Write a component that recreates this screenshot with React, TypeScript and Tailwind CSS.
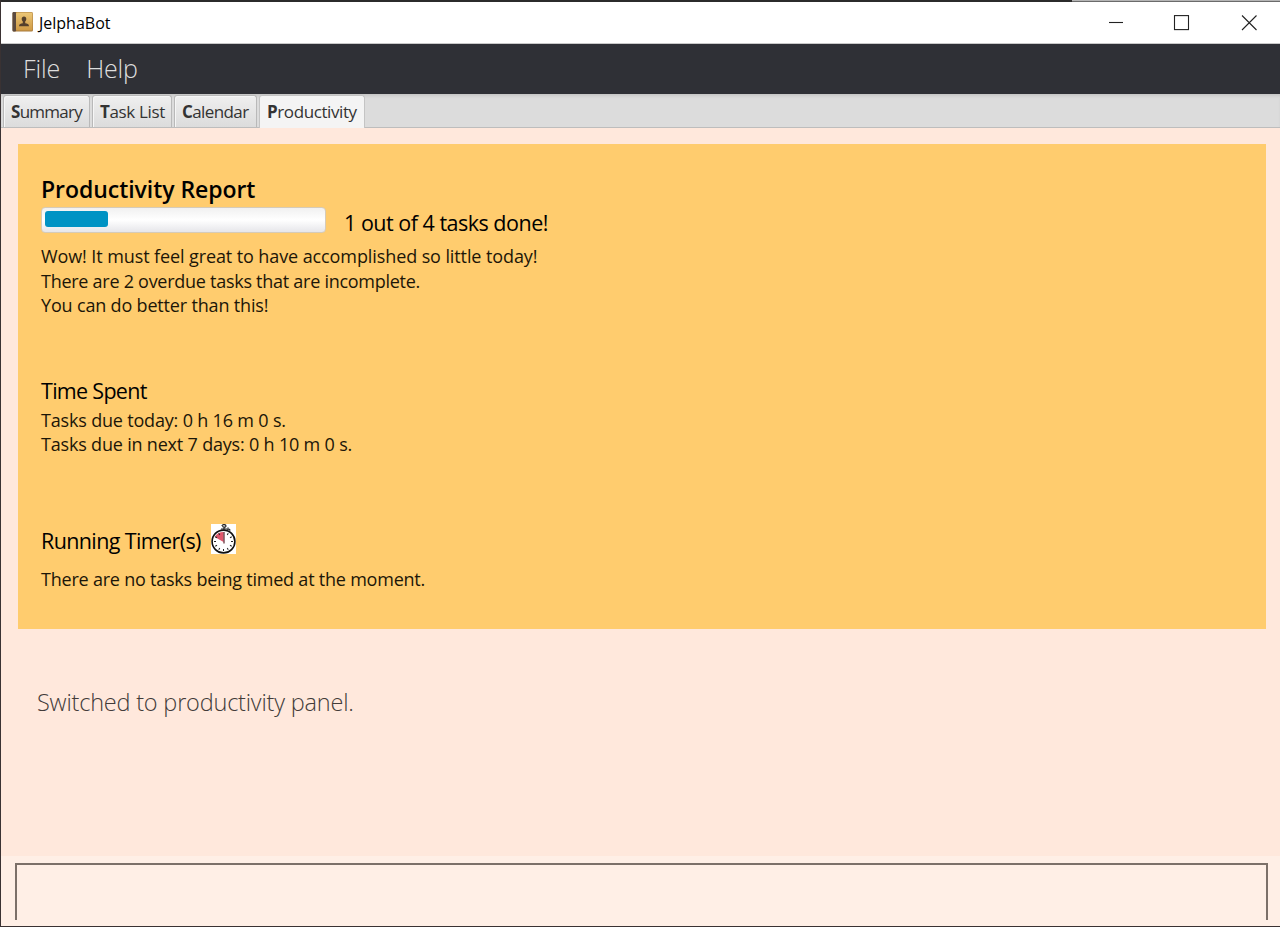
import type { ReactNode } from "react";

function BookIcon() {
  return (
    <svg width="22" height="22" viewBox="0 0 22 22" className="-mt-[2px] shrink-0">
      <defs>
        <linearGradient id="cover" x1="0" y1="0" x2="0" y2="1">
          <stop offset="0" stopColor="#ecc777" />
          <stop offset="1" stopColor="#cf9a45" />
        </linearGradient>
      </defs>
      <rect x="0.5" y="1" width="20.5" height="19.5" rx="1.5" fill="#a87a3c" />
      <rect x="4" y="1.5" width="16.5" height="18" rx="1" fill="url(#cover)" />
      <rect x="0.5" y="1" width="3.500" height="19.5" rx="1" fill="#5b4a40" />
      <path d="M12 5.500c1.500 0 2.300 1 2.300 2.500 0 1.100-.5 2-1.100 2.600v1.600c2 .2 3.800.6 3.800 3.100H7c0-2.500 1.800-2.900 3.800-3.100v-1.600c-.6-.6-1.100-1.500-1.100-2.600 0-1.500.8-2.500 2.300-2.500z" fill="#54402c" />
    </svg>
  );
}

function StopwatchIcon() {
  const ticks = [30, 60, 90, 120, 150, 180, 210, 240, 270, 300, 330];
  return (
    <svg width="25" height="30" viewBox="0 0 25 30" className="shrink-0">
      <rect width="25" height="30" fill="#fff" />
      <path d="M12.5 18V8A10 10 0 0 0 3.800 13z" fill="#e0566b" />
      <circle cx="12.500" cy="17.500" r="11.400" fill="none" stroke="#111" strokeWidth="1.600" />
      {ticks.map((a) => (
        <line key={a} x1="12.500" y1="8" x2="12.500" y2="10" stroke="#222" strokeWidth="1" transform={`rotate(${a} 12.5 17.5)`} />
      ))}
      <line x1="13" y1="8" x2="13" y2="19.500" stroke="#5a2530" strokeWidth="1.200" />
      <path d="M11 2c0-2 4-1.800 4 0s-4 1.400-3 0M13 3v3.500M10 5h6M17.200 3.500l-.6 2.800M17.800 5l1.500 1.500" fill="none" stroke="#222" strokeWidth="1.200" />
    </svg>
  );
}

function Tab({ first, rest, width, tracking, active }: { first: string; rest: string; width: string; tracking: string; active?: boolean }) {
  return (
    <div
      className={`${width} rounded-t-[3px] border border-b-0 pl-[7px] pt-[3px] text-[17px] leading-[26px] whitespace-nowrap text-[#333] ${
        active
          ? "h-[33px] border-[#c4c4c4] bg-[#f4f4f4]"
          : "h-[32px] border-[#b9b9b9] bg-linear-to-b from-[#efefef] to-[#dcdcdc] shadow-[inset_1px_1px_0_#f6f6f6]"
      }`}
    >
      <span className={tracking}>
        <b>{first}</b>
        {rest}
      </span>
    </div>
  );
}

function Line({ className, children }: { className: string; children: ReactNode }) {
  return (
    <p className="whitespace-nowrap">
      <span className={className}>{children}</span>
    </p>
  );
}

export default function App() {
  return (
    <div className="flex h-[927px] w-[1280px] flex-col overflow-hidden border-b border-l border-[#3a3233] bg-[#ffe8dc] font-['Open_Sans','Noto_Sans',sans-serif] text-black">
      <div className="flex h-[2px] shrink-0">
        <div className="w-[1071px] bg-[#2b2b2b]" />
        <div className="flex-1 border-b border-[#6b6b6b] bg-[#b5b5b5]" />
      </div>

      <header className="flex h-[42px] shrink-0 items-center border-b border-[#c9c9c9] bg-white pl-[11px]">
        <BookIcon />
        <span className="ml-[5px] text-[16px]">JelphaBot</span>
        <div className="ml-auto flex items-center pr-[23px]">
          <svg width="149" height="16" viewBox="0 0 149 16" fill="none" stroke="#222" strokeWidth="1.100">
            <path d="M1 7.500h14" />
            <rect x="66.500" y="0.600" width="14" height="14" />
            <path d="M134 0.500l14.500 14.500M148.500 0.500L134 15" />
          </svg>
        </div>
      </header>

      <nav className="flex h-[50px] shrink-0 items-center gap-[26px] bg-[#2f3036] pl-[22px] text-[25px] font-light text-[#dedede]">
        <span className="tracking-[-0.1px]">File</span>
        <span className="tracking-[-0.2px]">Help</span>
      </nav>

      <div className="flex h-[34px] shrink-0 gap-[2px] border-b border-[#bdbdbd] bg-[#dcdcdc] pt-px pl-[2px] shadow-[inset_0_3px_3px_-1px_#c6c6c6]">
        <Tab first="S" rest="ummary" width="w-[87px]" tracking="tracking-[-0.75px]" />
        <Tab first="T" rest="ask List" width="w-[80px]" tracking="tracking-[-0.35px]" />
        <Tab first="C" rest="alendar" width="w-[83px]" tracking="tracking-[-0.6px]" />
        <Tab first="P" rest="roductivity" width="w-[106px]" tracking="tracking-[-0.4px]" active />
      </div>

      <main className="flex-1 pt-[16px] pr-[14px] pl-[17px]">
        <section className="h-[485px] bg-[#ffcc6e] pt-[30px] pl-[23px]">
          <h1 className="h-[33px] text-[23px] leading-[31px] font-semibold whitespace-nowrap">
            <span className="tracking-[-0.05px]">Productivity Report</span>
          </h1>
          <div className="flex h-[27px]">
            <div className="h-[26px] w-[285px] rounded-[4px] border border-[#d6cbb8] bg-linear-to-b from-[#f1f1f1] via-white to-[#e6e6ea] p-[3px]">
              <div className="h-[16px] w-[63px] rounded-[3px] bg-[#0093c4]" />
            </div>
            <div className="ml-[18px] text-[21.500px] leading-[31px] whitespace-nowrap">
              <span className="tracking-[-0.5px]">1 out of 4 tasks done!</span>
            </div>
          </div>
          <div className="mt-[10px] text-[18px] leading-[24.500px] text-[#1c1608]">
            <Line className="tracking-[-0.100px]">Wow! It must feel great to have accomplished so little today!</Line>
            <Line className="tracking-[-0.270px]">There are 2 overdue tasks that are incomplete.</Line>
            <Line className="tracking-[-0.170px]">You can do better than this!</Line>
          </div>
          <h2 className="mt-[58px] text-[21.500px] leading-[30px] whitespace-nowrap">
            <span className="tracking-[-0.7px]">Time Spent</span>
          </h2>
          <div className="mt-[2px] text-[18px] leading-[24.500px] text-[#1c1608]">
            <Line className="tracking-[-0.180px]">Tasks due today: 0 h 16 m 0 s.</Line>
            <Line className="tracking-[-0.190px]">Tasks due in next 7 days: 0 h 10 m 0 s.</Line>
          </div>
          <div className="mt-[67px] flex h-[32px] whitespace-nowrap">
            <h2 className="w-[170px] pt-[2px] text-[21.500px] leading-[30px]">
              <span className="tracking-[-0.620px]">Running Timer(s)</span>
            </h2>
            <StopwatchIcon />
          </div>
          <div className="mt-[11px] text-[18px] leading-[24.500px] text-[#1c1608]">
            <Line className="tracking-[-0.220px]">There are no tasks being timed at the moment.</Line>
          </div>
        </section>
        <div className="mt-[55px] pl-[19px] text-[23.500px] leading-[36px] font-light whitespace-nowrap text-[#423b39]">
          <span className="tracking-[-0.200px]">Switched to productivity panel.</span>
        </div>
      </main>

      <footer className="h-[70px] shrink-0 bg-[#ffefe6] pt-[7px] pr-[12px] pl-[14px]">
        <input aria-label="Command" className="block h-[57px] w-full border-2 border-b-0 border-[#7c7069] bg-transparent px-3 text-[18px] outline-none" />
      </footer>
    </div>
  );
}
